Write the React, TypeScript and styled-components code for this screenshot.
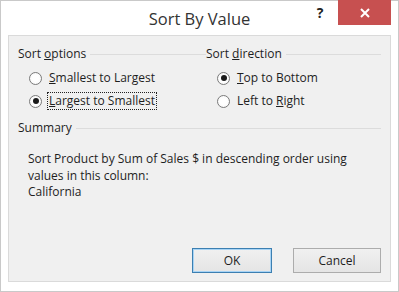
import React from 'react';
import styled, { createGlobalStyle } from 'styled-components';

const Global = createGlobalStyle`
  html, body {
    margin: 0;
    padding: 0;
    background: #fff;
  }
  body {
    font-family: "Open Sans", "Noto Sans", sans-serif;
    font-size: 12px;
    color: #1e1e1e;
  }
`

const Window = styled.div`
  box-sizing: border-box;
  width: 399px;
  height: 292px;
  border: 1px solid #c9c9c9;
  background: #fff;
  display: flex;
  flex-direction: column;
`

const TitleBar = styled.div`
  height: 34px;
  display: grid;
  grid-template-columns: 1fr auto 1fr;
  align-items: start;
`

const Title = styled.div`
  grid-column: 2;
  font-size: 16.5px;
  color: #333;
  padding-top: 6px;
`

const Controls = styled.div`
  grid-column: 3;
  justify-self: end;
  display: flex;
  align-items: flex-start;
  margin-right: 7px;
`

const HelpButton = styled.div`
  width: 26px;
  font-weight: bold;
  font-size: 14px;
  color: #222;
  padding-top: 2px;
  text-align: center;
  margin-right: 5px;
`

const CloseButton = styled.div`
  width: 53px;
  height: 25px;
  margin-top: -1px;
  background: #c75050;
  display: flex;
  align-items: center;
  justify-content: center;
`

const Panel = styled.div`
  flex: 1;
  margin: 0 7px 9px 7px;
  background: #f0f0f0;
  border: 1px solid #dadada;
  padding: 8px 9px 0 9px;
  display: flex;
  flex-direction: column;
`

const TopRow = styled.div`
  display: grid;
  grid-template-columns: 188px 1fr;
`

const Group = styled.div`
  display: flex;
  flex-direction: column;
`

const GroupHeader = styled.div<{ $space?: number }>`
  display: flex;
  align-items: center;
  gap: 4px;
  height: 18px;
  margin-bottom: ${p => p.$space ?? 7}px;

  &::after {
    content: "";
    flex: 1;
    border-top: 1px solid #dcdcdc;
    margin-top: 2px;
  }
`

const Options = styled.div`
  display: flex;
  flex-direction: column;
  gap: 5px;
  padding-left: 11px;
`

const RadioRow = styled.label`
  display: flex;
  align-items: center;
  gap: 6px;
  height: 18px;
`

const RadioCircle = styled.span<{ $checked?: boolean }>`
  box-sizing: border-box;
  width: 13px;
  height: 13px;
  border-radius: 50%;
  border: 1px solid #7a7a7a;
  background: radial-gradient(circle, #fff 40%, #f2f2f2 100%);
  display: flex;
  align-items: center;
  justify-content: center;

  &::after {
    content: "";
    display: ${p => (p.$checked ? 'block' : 'none')};
    width: 6px;
    height: 6px;
    border-radius: 50%;
    background: #1a1a1a;
  }
`

const RadioLabel = styled.span<{ $focused?: boolean }>`
  padding: 0 1px;
  outline: ${p => (p.$focused ? '1px dotted #222' : 'none')};
  line-height: 16px;
`

const Summary = styled.div`
  margin-top: 8px;
  display: flex;
  flex-direction: column;
`

const SummaryText = styled.div`
  padding-left: 10px;
  line-height: 16.5px;
  margin-top: 15px;
`

const Footer = styled.div`
  margin-top: auto;
  display: flex;
  justify-content: flex-end;
  gap: 21px;
  padding-bottom: 8px;
`

const Button = styled.button<{ $default?: boolean }>`
  box-sizing: border-box;
  height: 25px;
  width: ${p => (p.$default ? '80px' : '88px')};
  font-family: inherit;
  font-size: 12px;
  color: #1e1e1e;
  background: linear-gradient(#f0f0f0, #e5e5e5);
  border: 1px solid ${p => (p.$default ? '#3c7fb1' : '#acacac')};
  box-shadow: ${p => (p.$default ? 'inset 0 0 0 1px #a8d4f5' : 'none')};
  padding: 0;
`

export default function App() {
  return (
    <>
      <Global />
      <Window>
        <TitleBar>
          <Title>Sort By Value</Title>
          <Controls>
            <HelpButton>?</HelpButton>
            <CloseButton>
              <svg width="10" height="10" viewBox="0 0 10 10">
                <path d="M1 1 L9 9 M9 1 L1 9" stroke="#fff" strokeWidth="2" />
              </svg>
            </CloseButton>
          </Controls>
        </TitleBar>
        <Panel>
          <TopRow>
            <Group>
              <GroupHeader><span>Sort <u>o</u>ptions</span></GroupHeader>
              <Options>
                <RadioRow>
                  <RadioCircle />
                  <RadioLabel><u>S</u>mallest to Largest</RadioLabel>
                </RadioRow>
                <RadioRow>
                  <RadioCircle $checked />
                  <RadioLabel $focused><u>L</u>argest to Smallest</RadioLabel>
                </RadioRow>
              </Options>
            </Group>
            <Group>
              <GroupHeader><span>Sort <u>d</u>irection</span></GroupHeader>
              <Options>
                <RadioRow>
                  <RadioCircle $checked />
                  <RadioLabel><u>T</u>op to Bottom</RadioLabel>
                </RadioRow>
                <RadioRow>
                  <RadioCircle />
                  <RadioLabel>Left to <u>R</u>ight</RadioLabel>
                </RadioRow>
              </Options>
            </Group>
          </TopRow>
          <Summary>
            <GroupHeader $space={0}><span>Summary</span></GroupHeader>
            <SummaryText>
              Sort Product by Sum of Sales $ in descending order using<br />
              values in this column:<br />
              California
            </SummaryText>
          </Summary>
          <Footer>
            <Button $default>OK</Button>
            <Button>Cancel</Button>
          </Footer>
        </Panel>
      </Window>
    </>
  );
}
